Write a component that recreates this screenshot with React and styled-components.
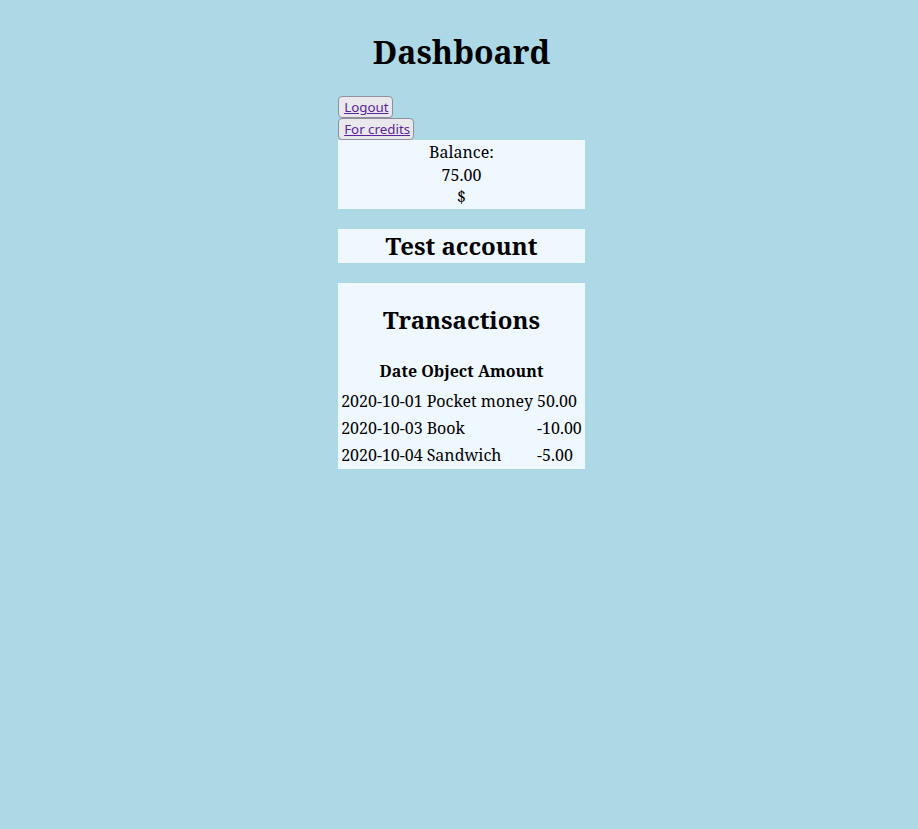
import React from "react";
import styled, { createGlobalStyle } from "styled-components";

const Global = createGlobalStyle`
  html, body { background: #add8e6; }
  body {
    margin: 8px;
    font-family: "Noto Serif", "DejaVu Serif", serif;
    font-size: 16px;
    color: #000;
  }
`;

const Page = styled.div`
  display: flex;
  flex-direction: column;
  align-items: center;
  padding-left: 5px;
`;

const Title = styled.h1`
  margin: 21.44px 0;
  font-size: 32px;
  line-height: 45px;
  font-weight: 700;
  text-align: center;
`;

const Column = styled.div`
  display: flex;
  flex-direction: column;
  align-items: stretch;
  width: fit-content;
`;

const Actions = styled.div`
  display: flex;
  flex-direction: column;
  align-items: flex-start;
`;

const Button = styled.button`
  display: block;
  margin: 0;
  padding: 1px 3px 1px 5px;
  border: 1px solid #8f8f9d;
  border-radius: 4px;
  background: #e9e9ed;
  font-family: "Noto Sans", sans-serif;
  font-size: 13.333px;
  line-height: 18px;
  cursor: pointer;
`;

const Link = styled.a`
  color: #5b22a0;
  text-decoration: underline;
`;

const Card = styled.section`
  background: #f0f8ff;
  text-align: center;
  margin-top: ${(p) => (p.$spaced ? "20px" : "0")};
`;

const BalanceCard = styled(Card)`
  padding-top: 1px;
  line-height: 22.67px;
`;

const CardTitle = styled.h2`
  margin: ${(p) => (p.$flush ? "0" : "19.92px 0")};
  font-size: 24px;
  line-height: 34px;
  font-weight: 700;
`;

const Table = styled.table`
  border-spacing: 2px;
  text-align: left;
`;

const HeadCell = styled.th`
  padding: 1px 1px 3px;
  font-weight: 700;
  text-align: center;
  line-height: 23px;
`;

const Cell = styled.td`
  padding: 2px 1px 0;
  line-height: 23px;
  white-space: nowrap;
`;

const transactions = [
  { date: "2020-10-01", object: "Pocket money", amount: "50.00" },
  { date: "2020-10-03", object: "Book", amount: "-10.00" },
  { date: "2020-10-04", object: "Sandwich", amount: "-5.00" },
];

export default function App() {
  return (
    <>
      <Global />
      <Page>
        <Title>Dashboard</Title>
        <Column>
          <Actions>
            <Button type="button">
              <Link href="#logout">Logout</Link>
            </Button>
            <Button type="button">
              <Link href="#credits">For credits</Link>
            </Button>
          </Actions>
          <BalanceCard>
            <div>Balance:</div>
            <div>75.00</div>
            <div>$</div>
          </BalanceCard>
          <Card $spaced>
            <CardTitle $flush>Test account</CardTitle>
          </Card>
          <Card $spaced>
            <CardTitle>Transactions</CardTitle>
            <Table>
              <thead>
                <tr>
                  <HeadCell colSpan={3}>Date Object Amount</HeadCell>
                </tr>
              </thead>
              <tbody>
                {transactions.map((t) => (
                  <tr key={t.date}>
                    <Cell>{t.date}</Cell>
                    <Cell>{t.object}</Cell>
                    <Cell>{t.amount}</Cell>
                  </tr>
                ))}
              </tbody>
            </Table>
          </Card>
        </Column>
      </Page>
    </>
  );
}
